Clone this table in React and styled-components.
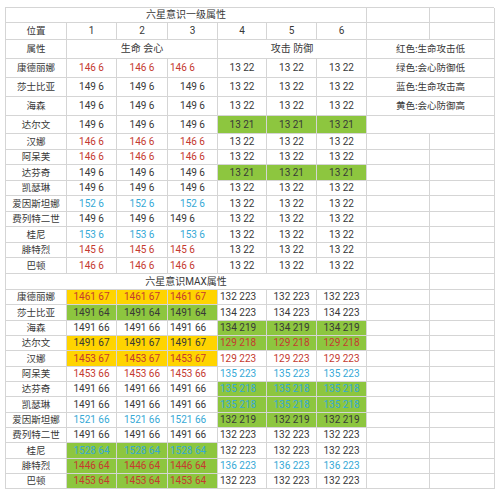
import React from "react";
import styled, { createGlobalStyle } from "styled-components";

const Global = createGlobalStyle`
  html, body { margin: 0; padding: 0; background: #fff; }
  body { font-family: Roboto, "Noto Sans CJK SC", sans-serif; }
`;

const COLORS = {
  red: "#c53a2f",
  blue: "#36a9d6",
  black: "#383838",
  green: "#8dc63f",
  yellow: "#ffd400",
  line: "#d5d5d5",
};

const Page = styled.div`
  padding: 7px 0 0 5px;
`;

const Sheet = styled.div`
  display: grid;
  width: 489px;
  grid-template-columns: 61px 50px 51px 50px 49px 50px 50px 63px 65px;
  grid-template-rows: ${(p) => p.$rows};
  border-top: 1px solid ${COLORS.line};
  border-left: 1px solid ${COLORS.line};
  box-sizing: border-box;
`;

const Cell = styled.div`
  grid-column: span ${(p) => p.$span || 1};
  box-sizing: border-box;
  border-right: 1px solid ${COLORS.line};
  border-bottom: 1px solid ${COLORS.line};
  background: ${(p) => p.$bg || "#fff"};
  color: ${(p) => p.$color || COLORS.black};
  font-size: 10px;
  line-height: 1;
  display: flex;
  align-items: center;
  justify-content: ${(p) => (p.$left ? "flex-start" : "center")};
  padding-left: ${(p) => (p.$left ? "2px" : "0")};
  white-space: nowrap;
  overflow: hidden;
`;

const NameCell = styled(Cell)`
  font-family: "Noto Sans CJK SC", sans-serif;
  font-size: 9.5px;
`;

const TitleCell = styled(Cell)`
  font-family: Roboto, "Noto Sans CJK SC", sans-serif;
  font-size: 10px;
`;

const LegendCell = styled(Cell)`
  font-family: "Noto Sans CJK SC", sans-serif;
  font-size: 9.5px;
`;

const level1 = [
  { n: "康德丽娜", a: "146 6", ac: "red", l3: true, b: "13 22" },
  { n: "莎士比亚", a: "149 6", b: "13 22" },
  { n: "海森", a: "149 6", b: "13 22" },
  { n: "达尔文", a: "149 6", b: "13 21", bb: "green" },
  { n: "汉娜", a: "146 6", ac: "red", b: "13 22" },
  { n: "阿呆芙", a: "146 6", ac: "red", b: "13 22" },
  { n: "达芬奇", a: "149 6", b: "13 21", bb: "green" },
  { n: "凯瑟琳", a: "149 6", b: "13 22" },
  { n: "爱因斯坦娜", a: "152 6", ac: "blue", b: "13 22" },
  { n: "费列特二世", a: "149 6", l3: true, b: "13 22" },
  { n: "桂尼", a: "153 6", ac: "blue", b: "13 22" },
  { n: "腓特烈", a: "145 6", ac: "red", l3: true, b: "13 22" },
  { n: "巴顿", a: "146 6", ac: "red", l3: true, b: "13 22" },
];

const levelMax = [
  { n: "康德丽娜", a: "1461 67", ac: "red", ab: "yellow", b: "132 223" },
  { n: "莎士比亚", a: "1491 64", ab: "green", b: "134 223" },
  { n: "海森", a: "1491 66", b: "134 219", bb: "green" },
  { n: "达尔文", a: "1491 67", ab: "yellow", b: "129 218", bc: "red", bb: "green" },
  { n: "汉娜", a: "1453 67", ac: "red", ab: "yellow", b: "129 223", bc: "red" },
  { n: "阿呆芙", a: "1453 66", ac: "red", b: "135 223", bc: "blue" },
  { n: "达芬奇", a: "1491 66", b: "135 218", bc: "blue", bb: "green" },
  { n: "凯瑟琳", a: "1491 66", b: "135 218", bc: "blue", bb: "green" },
  { n: "爱因斯坦娜", a: "1521 66", ac: "blue", b: "132 219", bb: "green" },
  { n: "费列特二世", a: "1491 66", b: "132 223" },
  { n: "桂尼", a: "1528 64", ac: "blue", ab: "green", b: "132 223" },
  { n: "腓特烈", a: "1446 64", ac: "red", ab: "green", b: "136 223", bc: "blue" },
  { n: "巴顿", a: "1453 64", ac: "red", ab: "green", b: "132 223" },
];

const legend = ["红色:生命攻击低", "绿色:会心防御低", "蓝色:生命攻击高", "黄色:会心防御高"];

function DataRow({ r, idx, maxMode, extra }) {
  const ac = COLORS[r.ac || "black"];
  const bc = COLORS[r.bc || "black"];
  const ab = r.ab ? COLORS[r.ab] : undefined;
  const bb = r.bb ? COLORS[r.bb] : undefined;
  return (
    <>
      <NameCell>{r.n}</NameCell>
      <Cell $color={ac} $bg={ab}>{r.a}</Cell>
      <Cell $color={ac} $bg={ab}>{r.a}</Cell>
      <Cell $color={ac} $bg={ab} $left={maxMode || r.l3}>{r.a}</Cell>
      <Cell $color={bc} $bg={bb} $left={maxMode}>{r.b}</Cell>
      <Cell $color={bc} $bg={bb}>{r.b}</Cell>
      <Cell $color={bc} $bg={bb}>{r.b}</Cell>
      {extra}
    </>
  );
}

const rowHeights = [
  15, 17, 19, 19, 19, 19, 18,
  16, 15, 16, 15, 16, 15, 16, 15, 16,
  16,
  15, 16, 15, 15, 16, 15, 15, 16, 15, 15, 16, 15, 15,
]
  .map((h) => `${h}px`)
  .join(" ");

export default function App() {
  return (
    <Page>
      <Global />
      <Sheet $rows={rowHeights}>
        <TitleCell $span={7}>六星意识一级属性</TitleCell>
        <Cell />
        <Cell />

        <NameCell>位置</NameCell>
        {[1, 2, 3, 4, 5, 6].map((n) => (
          <Cell key={n}>{n}</Cell>
        ))}
        <Cell />
        <Cell />

        <NameCell>属性</NameCell>
        <TitleCell $span={3}>生命 会心</TitleCell>
        <TitleCell $span={3}>攻击 防御</TitleCell>
        <LegendCell $span={2}>{legend[0]}</LegendCell>

        {level1.map((r, i) => (
          <DataRow
            key={r.n}
            r={r}
            idx={i}
            extra={
              i < 3 ? (
                <LegendCell $span={2}>{legend[i + 1]}</LegendCell>
              ) : i === 3 ? (
                <Cell $span={2} />
              ) : (
                <>
                  <Cell />
                  <Cell />
                </>
              )
            }
          />
        ))}

        <TitleCell $span={7}>六星意识MAX属性</TitleCell>
        <Cell />
        <Cell />

        {levelMax.map((r, i) => (
          <DataRow
            key={"m" + r.n}
            r={r}
            idx={i}
            maxMode
            extra={
              <>
                <Cell />
                <Cell />
              </>
            }
          />
        ))}
      </Sheet>
    </Page>
  );
}
